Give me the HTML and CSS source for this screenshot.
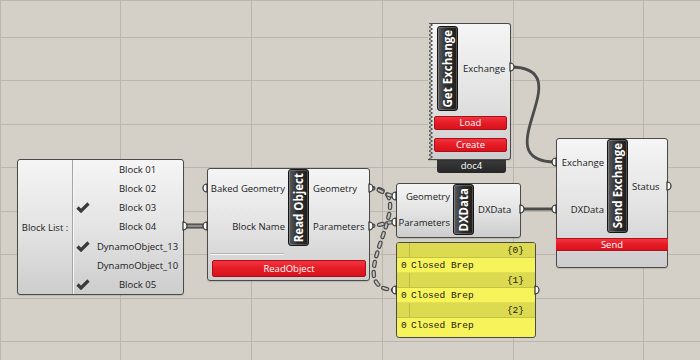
FILE: index.html
```html
<!DOCTYPE html>
<html>
<head>
<meta charset="utf-8">
<link rel="stylesheet" href="styles.css">
</head>
<body>
<div class="canvas">
  <svg class="layer" width="700" height="360" viewBox="0 0 700 360">
    <g class="grid">
      <line x1="0" y1="0.5" x2="700" y2="0.5"/>
      <line x1="0.5" y1="0" x2="0.5" y2="360"/>
      <line x1="120.5" y1="0" x2="120.5" y2="360"/>
      <line x1="251.5" y1="0" x2="251.5" y2="360"/>
      <line x1="382.5" y1="0" x2="382.5" y2="360"/>
      <line x1="513.5" y1="0" x2="513.5" y2="360"/>
      <line x1="643.5" y1="0" x2="643.5" y2="360"/>
      <line x1="0" y1="37.5" x2="700" y2="37.5"/>
      <line x1="0" y1="80.5" x2="700" y2="80.5"/>
      <line x1="0" y1="124.5" x2="700" y2="124.5"/>
      <line x1="0" y1="167.5" x2="700" y2="167.5"/>
      <line x1="0" y1="211.5" x2="700" y2="211.5"/>
      <line x1="0" y1="254.5" x2="700" y2="254.5"/>
      <line x1="0" y1="298.5" x2="700" y2="298.5"/>
      <line x1="0" y1="341.5" x2="700" y2="341.5"/>
    </g>
    <g class="wire-item">
      <path class="outer" d="M183 226 L207 226"/>
      <path class="inner" d="M183 226 L207 226"/>
    </g>
    <g class="wire-list">
      <path class="outer" d="M369 188 C430 188 333 290 396 290"/>
      <path class="inner" d="M369 188 C430 188 333 290 396 290"/>
      <path class="outer" d="M369 188 C381 188 384 196 396 196"/>
      <path class="inner" d="M369 188 C381 188 384 196 396 196"/>
      <path class="outer" d="M369 226 C381 226 384 222 396 222"/>
      <path class="inner" d="M369 226 C381 226 384 222 396 222"/>
    </g>
    <g class="wire-solid">
      <path d="M510 67 C585 67 481 162 556 162"/>
      <path d="M520 209 L556 209"/>
    </g>
  </svg>

  <div class="node n-list">
    <div class="list-label">Block List :</div>
    <div class="list-items">
      <div class="item"><span class="chk"></span><span class="txt">Block 01</span></div>
      <div class="item"><span class="chk"></span><span class="txt">Block 02</span></div>
      <div class="item"><span class="chk"><svg width="14" height="11" viewBox="0 0 14 11"><path d="M1.5 5.5 L5 9 L12.5 1.5"/></svg></span><span class="txt">Block 03</span></div>
      <div class="item"><span class="chk"></span><span class="txt">Block 04</span></div>
      <div class="item"><span class="chk"><svg width="14" height="11" viewBox="0 0 14 11"><path d="M1.5 5.5 L5 9 L12.5 1.5"/></svg></span><span class="txt">DynamoObject_13</span></div>
      <div class="item"><span class="chk"></span><span class="txt">DynamoObject_10</span></div>
      <div class="item"><span class="chk"><svg width="14" height="11" viewBox="0 0 14 11"><path d="M1.5 5.5 L5 9 L12.5 1.5"/></svg></span><span class="txt">Block 05</span></div>
    </div>
  </div>

  <div class="node n-read">
    <div class="body">
      <div class="ports in">
        <div class="port">Baked Geometry</div>
        <div class="port">Block Name</div>
      </div>
      <div class="pill"><span>Read Object</span></div>
      <div class="ports out">
        <div class="port">Geometry</div>
        <div class="port">Parameters</div>
      </div>
    </div>
    <div class="sep"></div>
    <div class="btn">ReadObject</div>
  </div>

  <div class="node n-dx">
    <div class="ports in">
      <div class="port">Geometry</div>
      <div class="port">Parameters</div>
    </div>
    <div class="pill"><span>DXData</span></div>
    <div class="ports out">
      <div class="port">DXData</div>
    </div>
  </div>

  <div class="panel">
    <div class="prow head"><span class="idx"></span><span class="path">{0}</span></div>
    <div class="prow data"><span class="idx">0</span><span class="val">Closed Brep</span></div>
    <div class="prow head"><span class="idx"></span><span class="path">{1}</span></div>
    <div class="prow data"><span class="idx">0</span><span class="val">Closed Brep</span></div>
    <div class="prow head"><span class="idx"></span><span class="path">{2}</span></div>
    <div class="prow data"><span class="idx">0</span><span class="val">Closed Brep</span></div>
  </div>

  <div class="get-wrap">
    <div class="node n-get">
      <svg class="zigzag" width="6" height="137" viewBox="0 0 6 137">
        <polygon class="zz-bg" points="0,0 1,0 4.5,2 1,4 4.5,6 1,8 4.5,10 1,12 4.5,14 1,16 4.5,18 1,20 4.5,22 1,24 4.5,26 1,28 4.5,30 1,32 4.5,34 1,36 4.5,38 1,40 4.5,42 1,44 4.5,46 1,48 4.5,50 1,52 4.5,54 1,56 4.5,58 1,60 4.5,62 1,64 4.5,66 1,68 4.5,70 1,72 4.5,74 1,76 4.5,78 1,80 4.5,82 1,84 4.5,86 1,88 4.5,90 1,92 4.5,94 1,96 4.5,98 1,100 4.5,102 1,104 4.5,106 1,108 4.5,110 1,112 4.5,114 1,116 4.5,118 1,120 4.5,122 1,124 4.5,126 1,128 4.5,130 1,132 4.5,134 1,136 0,136"/>
        <polyline class="zz-line" points="1,0 4.5,2 1,4 4.5,6 1,8 4.5,10 1,12 4.5,14 1,16 4.5,18 1,20 4.5,22 1,24 4.5,26 1,28 4.5,30 1,32 4.5,34 1,36 4.5,38 1,40 4.5,42 1,44 4.5,46 1,48 4.5,50 1,52 4.5,54 1,56 4.5,58 1,60 4.5,62 1,64 4.5,66 1,68 4.5,70 1,72 4.5,74 1,76 4.5,78 1,80 4.5,82 1,84 4.5,86 1,88 4.5,90 1,92 4.5,94 1,96 4.5,98 1,100 4.5,102 1,104 4.5,106 1,108 4.5,110 1,112 4.5,114 1,116 4.5,118 1,120 4.5,122 1,124 4.5,126 1,128 4.5,130 1,132 4.5,134 1,136"/>
      </svg>
      <div class="body">
        <div class="pill"><span>Get Exchange</span></div>
        <div class="ports out">
          <div class="port">Exchange</div>
        </div>
      </div>
      <div class="btn">Load</div>
      <div class="btn">Create</div>
    </div>
    <div class="tab">doc4</div>
  </div>

  <div class="node n-send">
    <div class="body">
      <div class="ports in">
        <div class="port">Exchange</div>
        <div class="port">DXData</div>
      </div>
      <div class="pill"><span>Send Exchange</span></div>
      <div class="ports out">
        <div class="port">Status</div>
      </div>
    </div>
    <div class="bar">Send</div>
  </div>

  <svg class="layer grips" width="700" height="360" viewBox="0 0 700 360">
    <path d="M207 184 A4 4 0 0 0 207 192 Z"/>
    <path d="M207 222 A4 4 0 0 0 207 230 Z"/>
    <path d="M396 192 A4 4 0 0 0 396 200 Z"/>
    <path d="M396 218 A4 4 0 0 0 396 226 Z"/>
    <path d="M396 286 A4 4 0 0 0 396 294 Z"/>
    <path d="M556 158 A4 4 0 0 0 556 166 Z"/>
    <path d="M556 205 A4 4 0 0 0 556 213 Z"/>
    <path d="M183 222 A4 4 0 0 1 183 230 Z"/>
    <path d="M369 184 A4 4 0 0 1 369 192 Z"/>
    <path d="M369 222 A4 4 0 0 1 369 230 Z"/>
    <path d="M520 205 A4 4 0 0 1 520 213 Z"/>
    <path d="M535 286 A4 4 0 0 1 535 294 Z"/>
    <path d="M510 63 A4 4 0 0 1 510 71 Z"/>
    <path d="M667 182 A4 4 0 0 1 667 190 Z"/>
  </svg>
</div>
</body>
</html>
```

FILE: styles.css
```css
* { box-sizing: border-box; }
body { margin: 0; }

.canvas {
  position: relative;
  width: 700px;
  height: 360px;
  overflow: hidden;
  background: #d4d0c8;
  font-family: "Open Sans", "Noto Sans", sans-serif;
  font-size: 9.5px;
  color: #1a1a22;
}

.layer { position: absolute; left: 0; top: 0; }
.grips { z-index: 5; }
.grips path { fill: #fff; stroke: #2e2e2e; stroke-width: 1.2; }

.grid line { stroke: #bab6ae; stroke-width: 1; }

.wire-item .outer { stroke: #3c3c3c; stroke-width: 5; fill: none; }
.wire-item .inner { stroke: #8e8e8e; stroke-width: 2.6; fill: none; }

.wire-list .outer { stroke: #4a4a4a; stroke-width: 4.4; fill: none; stroke-dasharray: 4 6; stroke-linecap: round; }
.wire-list .inner { stroke: #c4c4c4; stroke-width: 2; fill: none; stroke-dasharray: 4 6; stroke-linecap: round; }

.wire-solid path { stroke: #4c4c4c; stroke-width: 2.8; fill: none; }

/* generic component */
.node {
  position: absolute;
  border: 1px solid #4a4a4a;
  border-radius: 3px;
  background: linear-gradient(180deg, #f5f5f5 0%, #e2e2e2 55%, #cdcdcd 100%);
  box-shadow: 0 1px 1px rgba(0, 0, 0, 0.12);
}

.ports { display: flex; flex-direction: column; }
.port { flex: 1; display: flex; align-items: center; white-space: nowrap; }
.in .port { justify-content: flex-end; }

.pill {
  width: 21px;
  flex: none;
  display: flex;
  align-items: center;
  justify-content: center;
  border: 1px solid #151515;
  border-radius: 3px;
  background: linear-gradient(90deg, #5c5c5c 0%, #2e2e2e 45%, #1f1f1f 100%);
  box-shadow: inset 0 0 0 1px rgba(255, 255, 255, 0.22);
  color: #fff;
  font-weight: 700;
  font-size: 11.5px;
}
.pill span {
  writing-mode: vertical-rl;
  transform: rotate(180deg);
  white-space: nowrap;
  line-height: 1;
}

.btn {
  border: 1px solid #a80f16;
  border-radius: 2px;
  background: linear-gradient(180deg, #f23440 0%, #e41c26 50%, #d8121c 100%);
  color: #fff;
  text-align: center;
}

/* block list */
.n-list {
  left: 17px;
  top: 159px;
  width: 167px;
  height: 136px;
  display: flex;
}
.list-label {
  width: 55px;
  display: flex;
  align-items: center;
  justify-content: center;
  border-right: 1px solid #a4a4a4;
  box-shadow: 1px 0 0 #f8f8f8;
  white-space: nowrap;
}
.list-items { flex: 1; display: flex; flex-direction: column; }
.item { flex: 1; display: flex; align-items: center; }
.chk { width: 19px; display: flex; justify-content: center; }
.chk path { fill: none; stroke: #3a3a3a; stroke-width: 3.2; stroke-linejoin: miter; }
.txt { flex: 1; text-align: center; white-space: nowrap; }

/* read object */
.n-read { left: 207px; top: 168px; width: 163px; }
.n-read .body { display: flex; height: 77px; }
.n-read .in { width: 80px; padding-right: 3px; }
.n-read .out { flex: 1; padding-left: 4px; }
.sep {
  width: 74px;
  height: 1px;
  margin: 7px 0 0 2px;
  background: #b6b6b6;
  box-shadow: 0 1px 0 #f6f6f6;
}
.n-read .btn { height: 17px; line-height: 15px; margin: 6px 3px 3px 4px; }

/* dxdata */
.n-dx { left: 396px; top: 183px; width: 125px; height: 55px; display: flex; }
.n-dx .in { width: 56px; padding-right: 3px; padding-bottom: 2px; }
.n-dx .pill { height: 51px; }
.n-dx .out { flex: 1; padding-left: 4px; padding-bottom: 2px; }

/* panel */
.panel {
  position: absolute;
  left: 396px;
  top: 242px;
  width: 140px;
  height: 96px;
  border: 1px solid #4a4a4a;
  border-radius: 3px;
  background: #f6f45a;
  font-family: "Liberation Mono", monospace;
  font-size: 9.5px;
  color: #22200c;
  overflow: hidden;
}
.prow { height: 15px; display: flex; align-items: center; white-space: nowrap; }
.prow.head { background: #dcda50; border-bottom: 1px solid #c4c244; }
.prow.data { border-bottom: 1px solid #e2e050; }
.prow:last-child { border-bottom: none; }
.idx { width: 13px; height: 100%; display: flex; align-items: center; padding-left: 4px; }
.head .idx { border-right: 1px solid #bdbb48; }
.path { flex: 1; text-align: right; padding-right: 11px; }
.val { padding-left: 1px; }

/* get exchange */
.get-wrap {
  position: absolute;
  left: 428px;
  top: 23px;
  display: flex;
  flex-direction: column;
}
.n-get {
  position: relative;
  width: 83px;
  height: 137px;
  border-left: none;
  border-radius: 0 3px 3px 0;
  padding: 2px 3px 0 6px;
}
.zigzag { position: absolute; left: 0; top: -1px; }
.zz-bg { fill: #d4d0c8; }
.zz-line { fill: none; stroke: #4a4a4a; stroke-width: 1; }
.n-get .body { display: flex; height: 85px; margin-left: 3px; }
.n-get .pill { height: 85px; }
.n-get .out { flex: 1; padding-left: 5px; }
.n-get .btn { height: 14px; line-height: 12px; margin-top: 5px; }
.n-get .btn + .btn { margin-top: 8px; }
.tab {
  width: 69px;
  height: 14px;
  margin: -1px 0 0 9px;
  border-radius: 0 0 3px 3px;
  background: linear-gradient(180deg, #3c3c3c, #262626);
  color: #fff;
  text-align: center;
  line-height: 14px;
}

/* send exchange */
.n-send { left: 556px; top: 138px; width: 112px; height: 130px; }
.n-send .body { display: flex; height: 94px; }
.n-send .in { width: 50px; padding-right: 3px; }
.n-send .pill { height: 94px; }
.n-send .out { flex: 1; padding-left: 4px; }
.bar {
  height: 13px;
  margin: 5px -1px 0;
  background: linear-gradient(180deg, #f23440 0%, #e41c26 50%, #d8121c 100%);
  border-top: 1px solid #b0121a;
  border-bottom: 1px solid #b0121a;
  color: #fff;
  text-align: center;
  line-height: 11px;
}
```
